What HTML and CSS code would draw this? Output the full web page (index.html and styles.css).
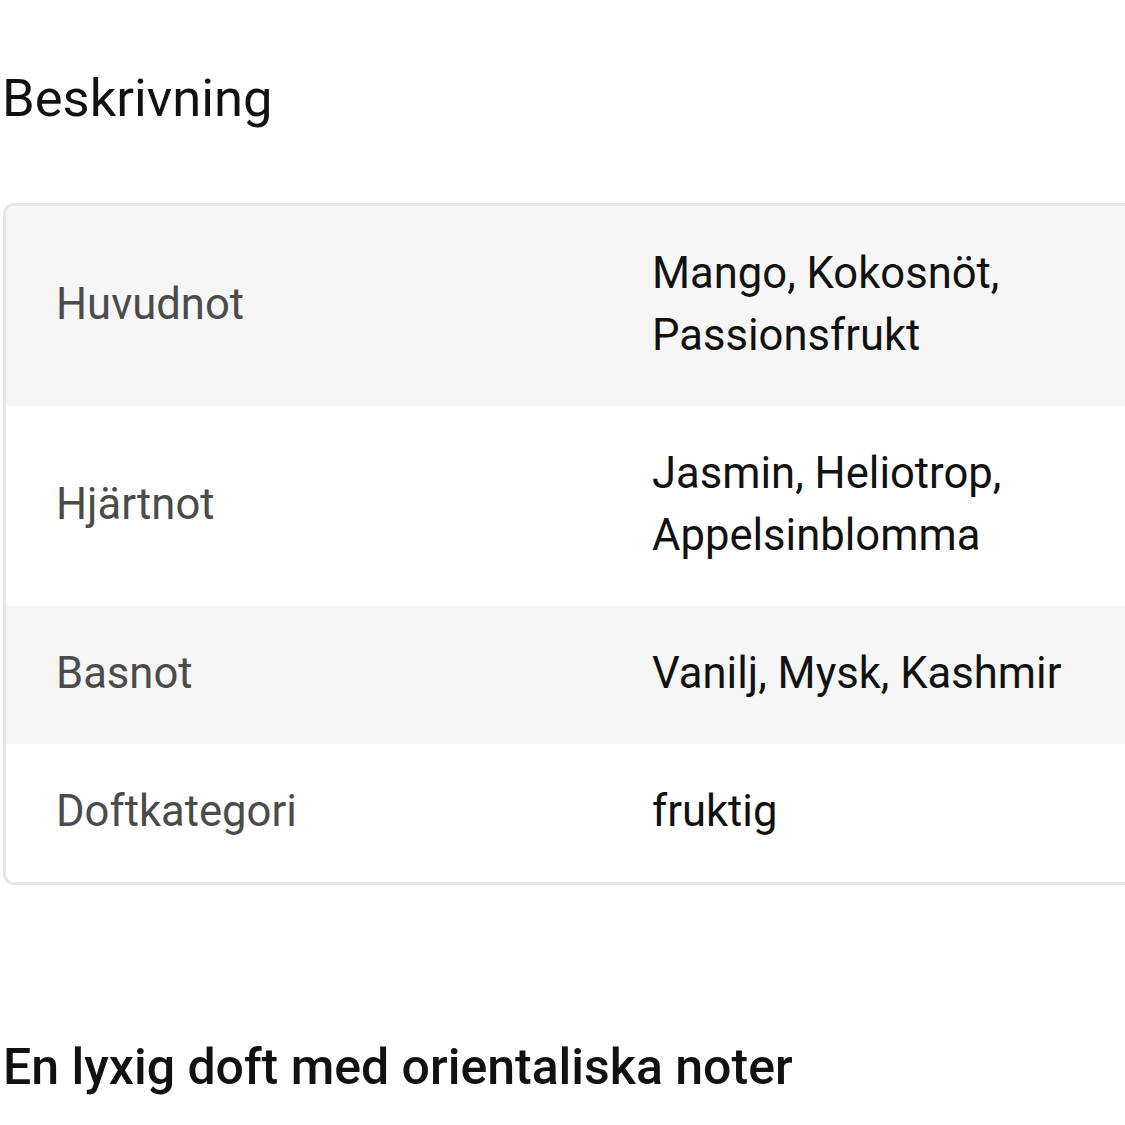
FILE: index.html
```html
<!DOCTYPE html>
<html lang="sv">
<head>
<meta charset="utf-8">
<title>Beskrivning</title>
<link rel="stylesheet" href="styles.css">
</head>
<body>
<main class="page">
  <h2 class="section-title">Beskrivning</h2>
  <div class="card">
    <table class="notes">
      <tbody>
        <tr class="row row-alt">
          <th class="label">Huvudnot</th>
          <td class="value">Mango, Kokosnöt,<br>Passionsfrukt</td>
        </tr>
        <tr class="row">
          <th class="label">Hjärtnot</th>
          <td class="value">Jasmin, Heliotrop,<br>Appelsinblomma</td>
        </tr>
        <tr class="row row-alt">
          <th class="label">Basnot</th>
          <td class="value">Vanilj, Mysk, Kashmir</td>
        </tr>
        <tr class="row">
          <th class="label">Doftkategori</th>
          <td class="value">fruktig</td>
        </tr>
      </tbody>
    </table>
  </div>
  <h3 class="subtitle">En lyxig doft med orientaliska noter</h3>
</main>
</body>
</html>
```

FILE: styles.css
```css
html, body {
  margin: 0;
  padding: 0;
  overflow: hidden;
  background: #ffffff;
}

body {
  font-family: Roboto, "Noto Sans", "Liberation Sans", sans-serif;
  color: #111111;
  width: 1125px;
  height: 1125px;
}

.page {
  padding-left: 3px;
}

.section-title {
  margin: 0;
  padding-top: 66px;
  padding-left: 0;
  font-size: 52.5px;
  font-weight: 400;
  line-height: 64px;
  color: #111111;
  text-indent: -1px;
}

.card {
  margin-top: 73px;
  width: 1200px;
  border: 3px solid #e6e6e6;
  border-radius: 11px;
  overflow: hidden;
  background: #ffffff;
}

.notes {
  width: 100%;
  border-collapse: collapse;
  table-layout: fixed;
}

.row {
  background: #ffffff;
}

.row-alt {
  background: #f6f6f6;
}

.label,
.value {
  padding: 37px 0 39px 50px;
  font-size: 43.6px;
  line-height: 62px;
  text-align: left;
  vertical-align: middle;
}

.label {
  width: 546px;
  font-weight: 400;
  color: #4b4b4b;
}

.value {
  color: #111111;
}

.subtitle {
  margin: 0;
  padding-top: 150px;
  font-size: 50px;
  font-weight: 500;
  line-height: 64px;
  color: #111111;
}
```
